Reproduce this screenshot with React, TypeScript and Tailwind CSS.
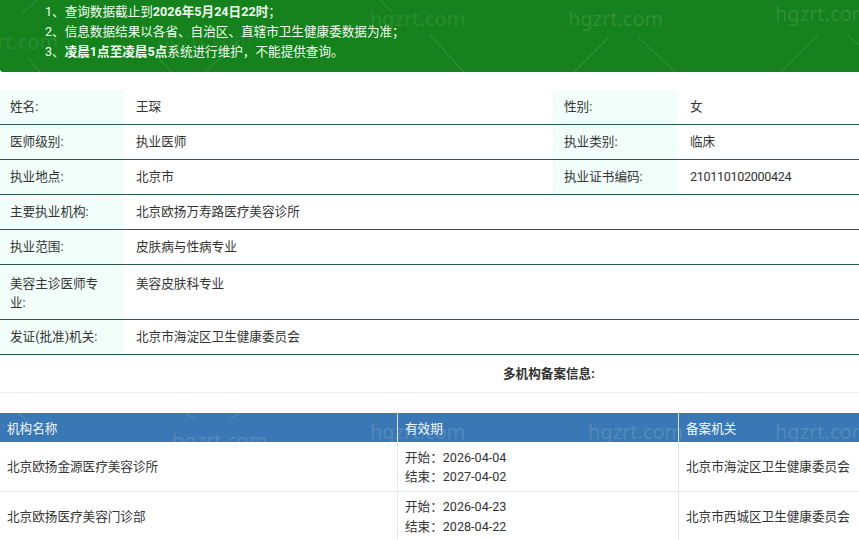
import React from "react";

const labelCls = "w-[124px] shrink-0 bg-[#f1fefa] pl-[10px] pr-[16px]";

const Row = ({ label, value, label2, value2 }: { label: string; value: string; label2?: string; value2?: React.ReactNode }) => (
  <div className="flex items-stretch border-b border-[#2c5a48] h-[35px] leading-[20px]">
    <div className={`${labelCls} flex items-center pt-[0.5px]`}>{label}</div>
    <div className={`${label2 ? "w-[429px]" : "flex-1"} flex items-center pl-[12px] pt-[0.5px]`}>{value}</div>
    {label2 && <div className="w-[125px] shrink-0 bg-[#f1fefa] pl-[11px] flex items-center pt-[0.5px]">{label2}</div>}
    {label2 && <div className="flex-1 flex items-center pl-[12px] pt-[0.5px]">{value2}</div>}
  </div>
);

const marks: [number, number, number][] = [
  [-37, 49, 0.1], [157, 46, 0.06], [370, 26, 0.1], [568, 26, 0.12], [775, 21, 0.12],
  [172, 448, 0.14], [370, 439, 0.14], [588, 439, 0.14], [775, 439, 0.14],
];

const strokes: [number, number, number, number][] = [
  [22, 13, 38, 0], [40, 72, 28, 58], [172, 72, 150, 50], [205, 72, 240, 40], [380, 0, 392, 12],
  [430, 35, 464, 72], [609, 37, 574, 72], [638, 37, 675, 72], [818, 35, 781, 72], [848, 35, 859, 45],
  [185, 413, 195, 419], [240, 413, 230, 419], [18, 413, 30, 424],
];

const Watermark = () => (
  <svg className="absolute left-0 top-0 pointer-events-none" width="859" height="540">
    {strokes.map(([a, b, c, d], i) => (
      <line key={i} x1={a} y1={b} x2={c} y2={d} stroke="#ffffff" strokeOpacity="0.16" strokeWidth="1" />
    ))}
    {marks.map(([x, y, o], i) => (
      <text key={i} x={x} y={y} fill="#ffffff" fillOpacity={o} fontSize="20" fontFamily="'Noto Sans', sans-serif">
        hgzrt.com
      </text>
    ))}
  </svg>
);

const App = () => {
  return (
    <div className="relative w-[859px] h-[540px] overflow-hidden bg-white text-[#333333] text-[12.6px] font-['Roboto','Noto_Sans_CJK_SC',sans-serif]">
      <div className="h-[72px] bg-[#15821d] pl-[45px] pt-[1.5px] text-[#f0fff0] leading-[20px] rounded-bl-[3px]">
        <p>1、查询数据截止到<b>2026年5月24日22时</b>；</p>
        <p>2、信息数据结果以各省、自治区、直辖市卫生健康委数据为准；</p>
        <p>3、<b>凌晨1点至凌晨5点</b>系统进行维护，不能提供查询。</p>
      </div>

      <div className="mt-[18px]">
        <Row label="姓名:" value="王琛" label2="性别:" value2="女" />
        <Row label="医师级别:" value="执业医师" label2="执业类别:" value2="临床" />
        <Row label="执业地点:" value="北京市" label2="执业证书编码:" value2={<span className="tracking-[-0.33px]">210110102000424</span>} />
        <Row label="主要执业机构:" value="北京欧扬万寿路医疗美容诊所" />
        <Row label="执业范围:" value="皮肤病与性病专业" />
        <div className="flex h-[55px] border-b border-[#2c5a48] leading-[19px]">
          <div className={`${labelCls} pt-[9px]`}>美容主诊医师专业:</div>
          <div className="flex-1 pl-[12px] pt-[9px]">美容皮肤科专业</div>
        </div>
        <Row label="发证(批准)机关:" value="北京市海淀区卫生健康委员会" />
      </div>

      <div className="h-[38px] border-b border-[#eeeeee] flex items-center pl-[503px] pt-[1px] font-bold">多机构备案信息:</div>

      <div className="mt-[20px]">
        <div className="flex h-[29px] bg-[#3a78b5] text-[#f2f7fb] items-center">
          <div className="w-[397px] pl-[7px] pt-[3px]">机构名称</div>
          <div className="w-[281px] pl-[7px] pt-[3px] h-full flex items-center border-l border-[#d5e4f0]">有效期</div>
          <div className="flex-1 pl-[7px] pt-[3px] h-full flex items-center border-l border-[#d5e4f0]">备案机关</div>
        </div>
        <div className="flex h-[50px] border-b border-[#e6e6e6] items-center">
          <div className="w-[397px] pl-[7px] pt-[1px]">北京欧扬金源医疗美容诊所</div>
          <div className="w-[281px] pl-[7px] h-full flex flex-col justify-center border-l border-[#e6e6e6] leading-[19px]">
            <span>开始：2026-04-04</span>
            <span>结束：2027-04-02</span>
          </div>
          <div className="flex-1 pl-[7px] pt-[1px] h-full flex items-center border-l border-[#e6e6e6]">北京市海淀区卫生健康委员会</div>
        </div>
        <div className="flex h-[50px] items-center">
          <div className="w-[397px] pl-[7px]">北京欧扬医疗美容门诊部</div>
          <div className="w-[281px] pl-[7px] h-full flex flex-col justify-center border-l border-[#e6e6e6] leading-[20px]">
            <span>开始：2026-04-23</span>
            <span>结束：2028-04-22</span>
          </div>
          <div className="flex-1 pl-[7px] h-full flex items-center border-l border-[#e6e6e6]">北京市西城区卫生健康委员会</div>
        </div>
      </div>
      <Watermark />
    </div>
  );
};

export default App;
